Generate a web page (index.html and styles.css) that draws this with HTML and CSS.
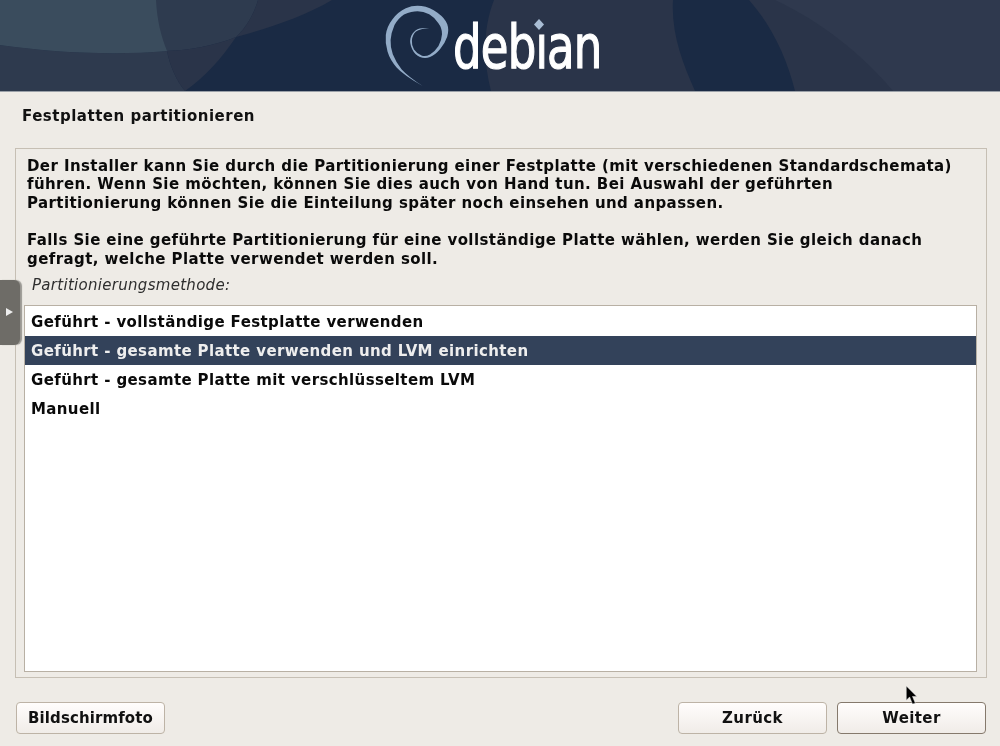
FILE: index.html
```html
<!DOCTYPE html>
<html lang="de">
<head>
<meta charset="utf-8">
<title>Debian Installer</title>
<link rel="stylesheet" href="styles.css">
</head>
<body>
<div class="screen">
  <header class="banner">
    <svg class="banner-art" viewBox="0 0 1000 91" aria-hidden="true">
      <rect width="1000" height="91" fill="#1a2a44"/>
      <path d="M0 0H258C254 14 246 28 236 37C214 46 190 50 167 51C110 56 50 52 0 45Z" fill="#2e3b4f"/>
      <path d="M258 0H332C305 16 270 28 236 37C246 28 254 14 258 0Z" fill="#2a3449"/>
      <path d="M0 45C50 52 110 56 167 51C170 66 176 80 185 91H0Z" fill="#2e3a4e"/>
      <path d="M167 51C190 50 214 46 236 37C222 58 204 78 185 91C176 80 170 66 167 51Z" fill="#2a3449"/>
      <path d="M0 0H156C157 20 161 36 167 51C110 56 50 52 0 45Z" fill="#3a4c5d"/>
      <path d="M494 0H673C671 32 682 62 695 91H491C483 60 483 28 494 0Z" fill="#2a3449"/>
      <path d="M749 0H1000V91H795C787 58 772 26 749 0Z" fill="#2a3449"/>
      <path d="M775 0H1000V91H893C862 54 822 22 775 0Z" fill="#2f394e"/>
    </svg>
    <div class="logo">
      <svg class="swirl" viewBox="0 0 68 90" aria-hidden="true">
        <path d="M39.7 83Q20.3 72 13.6 64.5Q7 57 4.5 48.6Q2 40.3 2.8 32Q3.7 23.7 9.5 16.2Q15.3 8.7 22.8 5.3Q30.3 2 38.6 3.1Q47 4.3 54.5 9.8Q62 15.3 64.2 21.1Q66.3 27 64.2 33.7Q62 40.3 57 46.2Q52 52 47 54Q42 56 37 54Q32 52 29.2 46.2Q26.3 40.3 27.5 35.3Q28.7 30.3 32.8 27.3Q37 24.3 46.3 25.3Q37 25.6 33 28.6Q29.3 32 28.9 37.5Q28.5 42 31 46.5Q34 51 39 52.8Q43 53.8 47 51.5Q52 48.5 55.5 43Q58.7 37 59 31.2Q59.2 25.3 55.4 20.3Q52 14.5 46.2 11.2Q40.3 8.2 34.5 8.2Q28.7 8.2 21 11.5Q15.5 15 11.5 22Q8 30 7.6 37Q7.2 43.7 9.8 51.2Q12.7 58.7 18.5 66.2Q25.3 73.7 39.7 83Z" fill="#93acc8"/>
      </svg>
      <span class="wordmark">debian</span>
      <svg class="logo-dot" viewBox="0 0 16 15" aria-hidden="true"><rect width="16" height="15" fill="#2a3449"/><path d="M8 2L13 7.5L8 13L3 7.5Z" fill="#a9bdd4"/></svg>
    </div>
  </header>
  <main class="content">
    <h1 class="title">Festplatten partitionieren</h1>
    <section class="frame">
      <p class="info">Der Installer kann Sie durch die Partitionierung einer Festplatte (mit verschiedenen Standardschemata)<br>führen. Wenn Sie möchten, können Sie dies auch von Hand tun. Bei Auswahl der geführten<br>Partitionierung können Sie die Einteilung später noch einsehen und anpassen.<br><br>Falls Sie eine geführte Partitionierung für eine vollständige Platte wählen, werden Sie gleich danach<br>gefragt, welche Platte verwendet werden soll.</p>
      <div class="caption">Partitionierungsmethode:</div>
      <ul class="list">
        <li class="item">Geführt - vollständige Festplatte verwenden</li>
        <li class="item selected">Geführt - gesamte Platte verwenden und LVM einrichten</li>
        <li class="item">Geführt - gesamte Platte mit verschlüsseltem LVM</li>
        <li class="item">Manuell</li>
      </ul>
    </section>
    <footer class="actions">
      <button class="btn btn-tight">Bildschirmfoto</button>
      <div class="actions-right">
        <button class="btn">Zurück</button>
        <button class="btn default">Weiter</button>
      </div>
    </footer>
  </main>
  <div class="side-tab"><span class="side-arrow"></span></div>
  <svg class="cursor" viewBox="0 0 14 22" aria-hidden="true"><path d="M1 1V16L4.5 12.5L7.5 20L10.5 19L7.5 12H12Z" fill="#000" stroke="#eee" stroke-width=".5"/></svg>
</div>
</body>
</html>
```
FILE: styles.css
```css
* { box-sizing: border-box; }
html, body { margin: 0; padding: 0; }
body { background: #eeebe6; font-family: "DejaVu Sans", sans-serif; color: #000; }
.screen { position: relative; width: 1000px; height: 746px; overflow: hidden; display: flex; flex-direction: column; }
.banner { position: relative; height: 92px; flex: none; border-bottom: 1px solid #9aa0a8; display: flex; padding-left: 383px; overflow: hidden; }
.banner-art { position: absolute; left: 0; top: 0; width: 1000px; height: 91px; filter: blur(.4px); }
.logo { position: relative; display: flex; height: 91px; filter: blur(.4px); }
.swirl { width: 68px; height: 90px; flex: none; margin-top: 3px; }
.wordmark { color: #fff; font: 400 61px/1 "DejaVu Sans Condensed", "DejaVu Sans", sans-serif; font-stretch: condensed; display: inline-block; margin: 16px 0 0 2px; transform: scaleX(.82); transform-origin: left center; letter-spacing: -1px; -webkit-text-stroke: 1.2px #fff; }
.logo-dot { position: absolute; left: 148px; top: 17px; width: 16px; height: 15px; }
.content { flex: 1; display: flex; flex-direction: column; padding: 14px 13px 13px 15px; filter: blur(.3px); }
.title { margin: 0 0 22px 7px; font-size: 15px; line-height: 20px; font-weight: 700; color: #111; letter-spacing: .51px; }
.frame { height: 530px; border: 1px solid #c6bfb4; padding: 7.5px 9px 5px 8px; display: flex; flex-direction: column; }
.info { margin: 0 0 0 3px; font-size: 15px; line-height: 18.7px; font-weight: 700; color: #0a0a0a; letter-spacing: .41px; }
.caption { margin: 7.5px 0 11px 8px; font-size: 15px; line-height: 18px; font-style: italic; color: #2e2e2e; letter-spacing: .29px; }
.list { list-style: none; margin: 0; padding: 1px 0 0; flex: 1; background: #fff; border: 1px solid #b8b0a4; }
.item { height: 29px; line-height: 29px; padding: 1px 0 0 6px; font-size: 15px; font-weight: 700; color: #0a0a0a; letter-spacing: .38px; }
.selected { background: #33425a; color: #eeeeee; }
.actions { display: flex; justify-content: space-between; margin-top: 24px; padding: 0 1px; }
.actions-right { display: flex; gap: 10px; }
.btn { width: 149px; height: 32px; border: 1px solid #bdb3a6; border-radius: 4px; background: linear-gradient(#fffdfc, #f0ece8); font: 700 15px "DejaVu Sans", sans-serif; color: #111; letter-spacing: .38px; padding: 0; }
.btn-tight { letter-spacing: .1px; }
.default { border-color: #85796c; }
.side-tab { position: absolute; left: 0; top: 280px; width: 20px; height: 65px; background: #6e6c67; border-radius: 0 6px 6px 0; box-shadow: 2px 0 1px #9a9893; display: flex; align-items: center; padding-left: 6px; }
.side-arrow { width: 0; height: 0; border-left: 7px solid #eee; border-top: 4px solid transparent; border-bottom: 4px solid transparent; margin-top: -2px; }
.cursor { position: absolute; left: 905px; top: 685px; width: 14px; height: 21px; }
```
